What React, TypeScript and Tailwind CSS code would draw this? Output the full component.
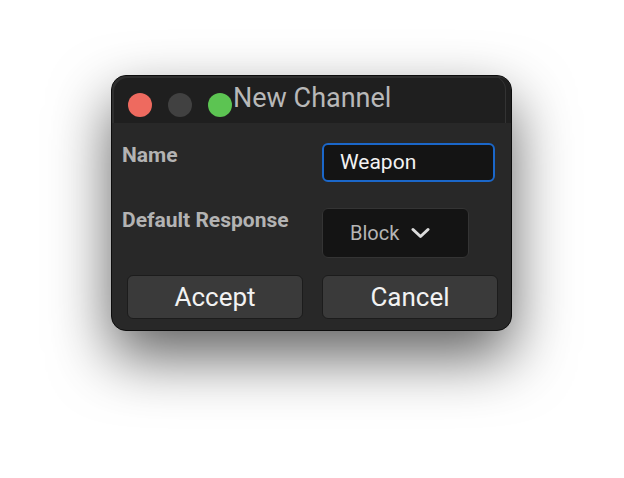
import React from "react";

export default function App() {
  return (
    <div
      className="w-[624px] h-[478px] bg-white pt-[75px] pl-[111px]"
      style={{ fontFamily: "Roboto, 'Liberation Sans', sans-serif" }}
    >
      <div className="w-[401px] h-[256px] rounded-[15px] bg-[#282828] border border-[#0c0c0c] shadow-[0_26px_60px_rgba(0,0,0,0.62)] overflow-hidden flex flex-col">
        {/* Title bar */}
        <div className="h-[47px] bg-[#1f1f1f] rounded-t-[14px] shadow-[inset_2px_2px_0_#2e2e2e,inset_-5px_0_0_#1f1f1f,inset_-6px_0_0_#333] flex items-start pl-[16px]">
          <div className="mt-[17px] w-[24px] h-[24px] rounded-full bg-[#ee6a5f]" />
          <div className="mt-[17px] ml-[16px] w-[24px] h-[24px] rounded-full bg-[#414141]" />
          <div className="mt-[17px] ml-[16px] w-[24px] h-[24px] rounded-full bg-[#5cc452]" />
          <div className="mt-[9px] ml-[1px] text-[27px] leading-[27px] text-[#b8b8b8]">New Channel</div>
        </div>
        {/* Body */}
        <div className="flex flex-col pl-[10px]">
          <div className="flex mt-[20px]">
            <div className="w-[200px] pt-[2px] text-[21px] leading-[21px] font-bold text-[#b3b3b3]">Name</div>
            <div className="w-[173px] h-[39px] rounded-[6px] border-2 border-[#1b67c9] bg-[#141414] flex items-center pl-[16px] text-[21px] text-[#f2f2f2]">
              Weapon
            </div>
          </div>
          <div className="flex mt-[26px]">
            <div className="w-[200px] pt-[2px] text-[21px] leading-[21px] font-bold text-[#b3b3b3]">Default Response</div>
            <div className="w-[147px] h-[50px] rounded-[6px] border border-[#343434] bg-[#141414] flex items-center pl-[27px] text-[20px] text-[#b5b5b5]">
              <span>Block</span>
              <svg className="ml-[12px]" width="19" height="12" viewBox="0 0 19 12" fill="none">
                <path d="M2 2.5 L9.5 9.5 L17 2.5" stroke="#dcdcdc" strokeWidth="3" strokeLinecap="round" strokeLinejoin="round" />
              </svg>
            </div>
          </div>
          <div className="flex mt-[17px] pl-[5px] gap-[19px]">
            <div className="w-[176px] h-[44px] rounded-[6px] border border-[#1c1c1c] bg-[#3a3a3a] flex items-center justify-center text-[26px] text-[#f2f2f2]">
              Accept
            </div>
            <div className="w-[176px] h-[44px] rounded-[6px] border border-[#1c1c1c] bg-[#3a3a3a] flex items-center justify-center text-[26px] text-[#f2f2f2]">
              Cancel
            </div>
          </div>
        </div>
      </div>
    </div>
  );
}
